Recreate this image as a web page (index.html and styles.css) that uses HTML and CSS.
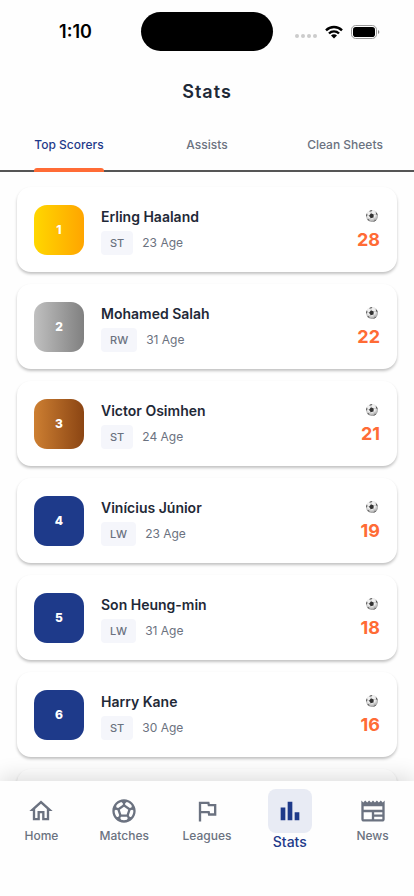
FILE: index.html
```html
<!DOCTYPE html>
<html lang="en">
<head>
<meta charset="utf-8">
<meta name="viewport" content="width=device-width, initial-scale=1">
<title>Stats</title>
<link rel="stylesheet" href="styles.css">
</head>
<body>
<svg class="defs" aria-hidden="true">
  <defs>
    <radialGradient id="shade" cx="45%" cy="35%" r="65%">
      <stop offset="0.5" stop-color="#f0f0f0"/>
      <stop offset="1" stop-color="#999"/>
    </radialGradient>
  </defs>
  <symbol id="ball" viewBox="0 0 24 24">
    <circle cx="12" cy="12" r="12" fill="url(#shade)"/>
    <path fill="#333" d="M10 6.500l5.500 2.500-.5 6-5.500 1.500-3.500-5zM6 2.500l4-2 3 .5-2 1.500-3 .7zM19.500 4l3 4 .5 3-2.500-2.500zM.5 10l1.500-3.500.8 3.500L1 14zM2.500 18l2.500.5 2.500 3.500C5 21 3.500 19.500 2.500 18zM14 23.300l3.500-2.500 3.500-2C19.500 21 17 23 14 23.300z"/>
    <path stroke="#999" stroke-width=".8" fill="none" d="M10 6.500V3M15.500 9l5-.5M15 15l3 5.500M9.500 16.500l-4 2.500M6 11.500l-3-1.500"/>
  </symbol>
</svg>
<div class="screen">
  <header class="status">
    <time class="clock">1:10</time>
    <div class="island"></div>
    <div class="indicators">
      <span class="signal"><i></i><i></i><i></i><i></i></span>
      <svg class="wifi" viewBox="0 0 18 14" aria-hidden="true">
        <path fill="none" stroke="#000" stroke-width="2.400" d="M1 5.300a11.300 11.300 0 0 1 16 0M4 8.500a7 7 0 0 1 10 0"/>
        <path d="M9 13.500l-3-3a4.200 4.200 0 0 1 6 0z"/>
      </svg>
      <svg class="battery" viewBox="0 0 29 14" aria-hidden="true">
        <rect x=".5" y=".5" width="25" height="13" rx="4.200" fill="none" stroke="#999"/>
        <rect x="2" y="2" width="22" height="10" rx="2.800"/>
        <path fill="#888" d="M27 5c1.800.6 1.800 3.400 0 4z"/>
      </svg>
    </div>
  </header>
  <h1 class="title">Stats</h1>
  <nav class="tabs" aria-label="Categories">
    <button class="tab active" type="button"><span>Top Scorers</span></button>
    <button class="tab" type="button"><span>Assists</span></button>
    <button class="tab" type="button"><span>Clean Sheets</span></button>
  </nav>
  <main class="list">
    <article class="card"><div class="rank gold">1</div><div class="info"><h2>Erling Haaland</h2><div class="meta"><span class="pos">ST</span><span>23 Age</span></div></div><div class="score"><svg aria-hidden="true"><use href="#ball"/></svg><strong>28</strong></div></article>
    <article class="card"><div class="rank silver">2</div><div class="info"><h2>Mohamed Salah</h2><div class="meta"><span class="pos">RW</span><span>31 Age</span></div></div><div class="score"><svg aria-hidden="true"><use href="#ball"/></svg><strong>22</strong></div></article>
    <article class="card"><div class="rank bronze">3</div><div class="info"><h2>Victor Osimhen</h2><div class="meta"><span class="pos">ST</span><span>24 Age</span></div></div><div class="score"><svg aria-hidden="true"><use href="#ball"/></svg><strong>21</strong></div></article>
    <article class="card"><div class="rank">4</div><div class="info"><h2>Vinícius Júnior</h2><div class="meta"><span class="pos">LW</span><span>23 Age</span></div></div><div class="score"><svg aria-hidden="true"><use href="#ball"/></svg><strong>19</strong></div></article>
    <article class="card"><div class="rank">5</div><div class="info"><h2>Son Heung-min</h2><div class="meta"><span class="pos">LW</span><span>31 Age</span></div></div><div class="score"><svg aria-hidden="true"><use href="#ball"/></svg><strong>18</strong></div></article>
    <article class="card"><div class="rank">6</div><div class="info"><h2>Harry Kane</h2><div class="meta"><span class="pos">ST</span><span>30 Age</span></div></div><div class="score"><svg aria-hidden="true"><use href="#ball"/></svg><strong>16</strong></div></article>
    <article class="card"></article>
  </main>
  <nav class="bottom" aria-label="Main">
    <a href="#home"><svg viewBox="0 0 24 24"><path d="M12 5.690l5 4.500V18h-2v-6H9v6H7v-7.810l5-4.500M12 3L2 12h3v8h6v-6h2v6h6v-8h3L12 3z"/></svg>Home</a>
    <a href="#matches"><svg viewBox="0 0 24 24"><path d="M12 2C6.480 2 2 6.480 2 12s4.480 10 10 10 10-4.480 10-10S17.520 2 12 2zm1 3.300l1.350-.95c1.820.56 3.370 1.760 4.380 3.340l-.39 1.340-1.350.46L13 6.700V5.300zm-3.350-.95L11 5.300v1.400L7.010 9.490l-1.350-.46-.39-1.340c1.010-1.570 2.560-2.770 4.380-3.340zM7.080 17.110l-1.140.1C4.730 15.810 4 13.990 4 12c0-.12.010-.23.020-.35l1-.73 1.380.48 1.460 4.340-.78 1.370zm7.420 2.480c-.79.26-1.630.41-2.500.41s-1.710-.15-2.500-.41l-.69-1.490.64-1.100h5.110l.64 1.110-.7 1.480zM14.270 15H9.730l-1.350-4.020L12 8.440l3.630 2.540L14.270 15zm3.790 2.210l-1.140-.1-.79-1.370 1.460-4.340 1.390-.47 1 .73c.010.110.020.220.020.340 0 1.990-.73 3.810-1.940 5.210z"/></svg>Matches</a>
    <a href="#leagues"><svg viewBox="0 0 24 24"><path d="M12.360 6l.4 2H18v6h-3.360l-.4-2H7V6h5.360M14 4H5v17h2v-7h5.600l.4 2h7V6h-5.600L14 4z"/></svg>Leagues</a>
    <a href="#stats" class="current" aria-current="page"><span class="tile"><svg viewBox="0 0 24 24"><path d="M4 9h4v11H4zM16 13h4v7h-4zM10 4h4v16h-4z"/></svg></span>Stats</a>
    <a href="#news"><svg viewBox="0 0 24 24"><path d="M22 3l-1.670 1.670L18.670 3 17 4.670 15.330 3l-1.660 1.670L12 3l-1.670 1.670L8.670 3 7 4.670 5.330 3 3.670 4.670 2 3v16c0 1.100.9 2 2 2h16c1.100 0 2-.9 2-2V3zM11 19H4v-6h7v6zm9 0h-7v-2h7v2zm0-4h-7v-2h7v2zm0-4H4V8h16v3z"/></svg>News</a>
  </nav>
</div>
</body>
</html>
```
FILE: styles.css
```css
* { box-sizing: border-box; }
body {
  margin: 0;
  background: #fefefe;
  color: #1f2937;
  font-family: Inter, "Liberation Sans", sans-serif;
}
.defs { display: block; width: 0; height: 0; }
.screen {
  display: flex;
  flex-direction: column;
  height: 100vh;
  overflow: hidden;
}
.status {
  display: grid;
  grid-template-columns: 1fr 132px 1fr;
  flex: none;
  align-items: center;
  padding-top: 12px;
}
.clock {
  padding-left: 10px;
  color: #000;
  font-size: 18px;
  font-weight: 600;
  line-height: 20px;
  text-align: center;
}
.island { height: 39px; border-radius: 20px; background: #000; }
.indicators {
  display: flex;
  align-items: center;
  justify-content: flex-end;
  gap: 8px;
  padding-right: 34px;
}
.signal { display: flex; gap: 2px; padding-top: 9px; }
.signal i { width: 4px; height: 4px; border-radius: 50%; background: #ccc; }
.wifi { width: 18px; height: 14px; }
.battery { width: 29px; height: 14px; }
.title {
  flex: none;
  margin: 0;
  padding: 29px 0;
  font-size: 18px;
  font-weight: 600;
  line-height: 24px;
  letter-spacing: 1px;
  text-align: center;
}
.tabs {
  display: grid;
  flex: none;
  grid-template-columns: repeat(3, 1fr);
  border-bottom: 2px solid #555;
}
.tab {
  height: 37px;
  padding: 0;
  border: 0;
  background: none;
  color: #6b7280;
  font: 500 12px/24px Inter, sans-serif;
  white-space: nowrap;
}
.tab span {
  display: block;
  width: fit-content;
  height: 37px;
  margin: 0 auto;
}
.tab.active { color: #1e3a8a; }
.tab.active span { position: relative; }
.tab.active span::after {
  content: "";
  position: absolute;
  right: 0;
  bottom: -2px;
  left: 0;
  height: 4px;
  border-radius: 3px 3px 0 0;
  background: #ff6b35;
}
.list {
  display: flex;
  flex: 1;
  flex-direction: column;
  gap: 12px;
  min-height: 0;
  padding: 15px 17px 0;
  overflow: hidden;
}
.card {
  display: flex;
  flex: none;
  align-items: center;
  min-height: 85px;
  padding: 0 17px;
  border-radius: 14px;
  background: #fff;
  box-shadow: 0 2px 3px rgba(0, 0, 0, 0.24);
}
.rank {
  display: flex;
  align-items: center;
  justify-content: center;
  width: 50px;
  height: 50px;
  border-radius: 13px;
  background: #1e3a8a;
  color: #fff;
  font-size: 12px;
  font-weight: 800;
}
.gold { background: linear-gradient(90deg, #ffd700, #ffa500); }
.silver { background: linear-gradient(90deg, #c0c0c0, #808080); }
.bronze { background: linear-gradient(90deg, #cd7f32, #8b4513); }
.info { flex: 1; padding: 2px 0 0 17px; }
.info h2 {
  margin: 0 0 4px;
  font-size: 14px;
  font-weight: 600;
  line-height: 20px;
}
.meta {
  display: flex;
  align-items: center;
  gap: 9px;
  color: #6b7280;
  font-size: 12px;
  line-height: 24px;
}
.pos {
  padding: 0 9px;
  border-radius: 4px;
  background: #f5f6fb;
  font-size: 11px;
  font-weight: 500;
}
.score {
  display: flex;
  flex-direction: column;
  align-items: flex-end;
  gap: 6px;
  padding-top: 3px;
}
.score svg { width: 12px; height: 12px; margin-right: 2px; }
.score strong { color: #ff6b35; font-size: 18px; line-height: 24px; }
.bottom {
  position: relative;
  display: grid;
  flex: none;
  grid-template-columns: repeat(5, 1fr);
  min-height: 115px;
  background: #fefefe;
  box-shadow: 0 -4px 20px rgba(0, 0, 0, 0.14);
}
.bottom a {
  display: flex;
  flex-direction: column;
  align-items: center;
  gap: 2px;
  padding-top: 16px;
  color: #6b7280;
  font-size: 12px;
  font-weight: 500;
  line-height: 18px;
  text-decoration: none;
}
.bottom svg { width: 28px; height: 28px; fill: currentColor; }
.bottom .current {
  gap: 0;
  padding-top: 8px;
  color: #1e3a8a;
  font-size: 14px;
}
.tile {
  display: grid;
  place-items: center;
  width: 44px;
  height: 44px;
  border-radius: 8px;
  background: #e8ebf4;
}
```
